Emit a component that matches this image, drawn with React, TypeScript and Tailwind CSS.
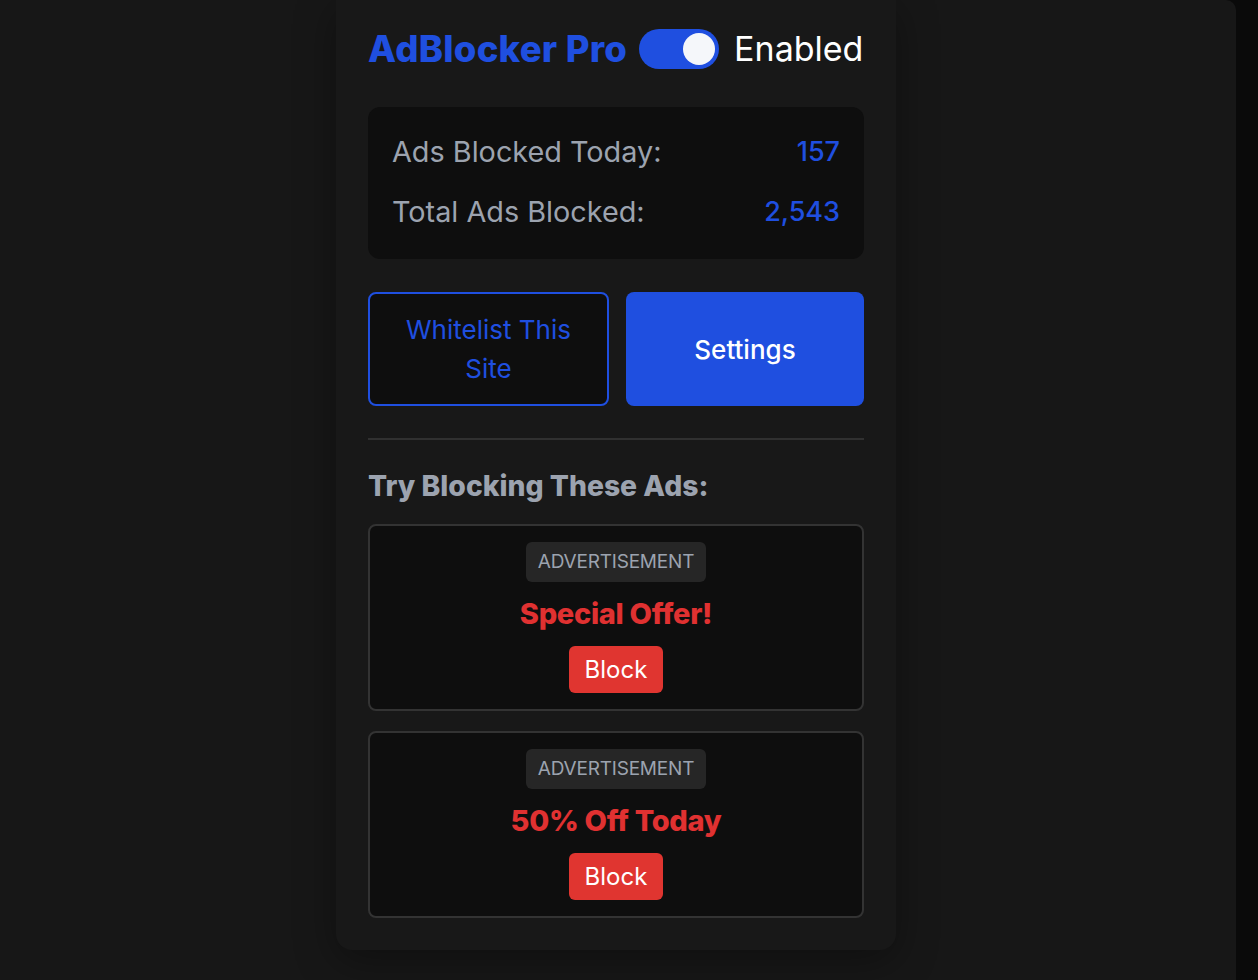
import React from "react";

const BLUE = "text-[#1f4fe0]";

function AdCard({ title }: { title: string }) {
  return (
    <div className="flex flex-col items-center rounded-lg border-2 border-[#333333] bg-[#0e0e0e] px-4 pt-4 pb-4">
      <div className="rounded-md bg-[#262626] px-3 text-[19px] leading-10 uppercase tracking-[-0.2px] text-[#9ca3af]">
        Advertisement
      </div>
      <div className="my-2 text-[29px] font-extrabold leading-[48px] tracking-[-0.3px] text-[#e03131]">{title}</div>
      <button className="rounded-md bg-[#e03530] px-4 text-[24px] leading-[47px] text-white">
        Block
      </button>
    </div>
  );
}

export default function App() {
  return (
    <div className="flex min-h-[980px] w-full bg-[#0a0a0a] font-['Inter',sans-serif]">
      <div className="flex w-[1236px] justify-center rounded-tr-[10px] bg-[#171717] pr-1 pb-[30px]">
        <div className="h-fit w-[560px] rounded-b-2xl bg-[#181818] px-8 pt-[29px] pb-8 shadow-[0_10px_40px_rgba(0,0,0,0.35)]">
          <div className="flex h-10 items-center whitespace-nowrap">
            <h1 className={`shrink-0 text-[36.5px] font-extrabold leading-10 tracking-[0.25px] ${BLUE}`}>AdBlocker Pro</h1>
            <div className="ml-3 flex h-10 w-20 shrink-0 items-center justify-end rounded-full bg-[#1f4fe0] px-1">
              <div className="h-8 w-8 rounded-full bg-[#f5f7fa]" />
            </div>
            <span className="ml-[15px] shrink-0 text-[34px] leading-10 text-white">Enabled</span>
          </div>

          <div className="mt-[38px] flex flex-col gap-6 rounded-xl bg-[#0e0e0e] px-6 pt-[27px] pb-[29px]">
            <div className="flex items-center justify-between leading-9">
              <span className="text-[28.8px] text-[#9ca3af]">Ads Blocked Today:</span>
              <span className={`text-[27px] font-medium ${BLUE}`}>157</span>
            </div>
            <div className="flex items-center justify-between leading-9">
              <span className="text-[28.8px] text-[#9ca3af]">Total Ads Blocked:</span>
              <span className={`text-[27px] font-medium ${BLUE}`}>2,543</span>
            </div>
          </div>

          <div className="mt-[33px] grid grid-cols-[241px_1fr] gap-[17px]">
            <button className={`rounded-lg border-2 border-[#1f4fe0] bg-[#0e0e0e] px-4 py-4 text-[26px] leading-[39px] ${BLUE}`}>
              Whitelist This
              <br />
              Site
            </button>
            <button className="rounded-lg bg-[#1f4fe0] px-4 py-4 text-[26px] font-medium leading-[39px] text-white">
              Settings
            </button>
          </div>

          <div className="mt-8 h-[2px] bg-[#303030]" />

          <h2 className="mt-[26px] text-[28.3px] font-extrabold leading-10 text-[#9ca3af]">Try Blocking These Ads:</h2>

          <div className="mt-[18px] flex flex-col gap-5">
            <AdCard title="Special Offer!" />
            <AdCard title="50% Off Today" />
          </div>
        </div>
      </div>
    </div>
  );
}
